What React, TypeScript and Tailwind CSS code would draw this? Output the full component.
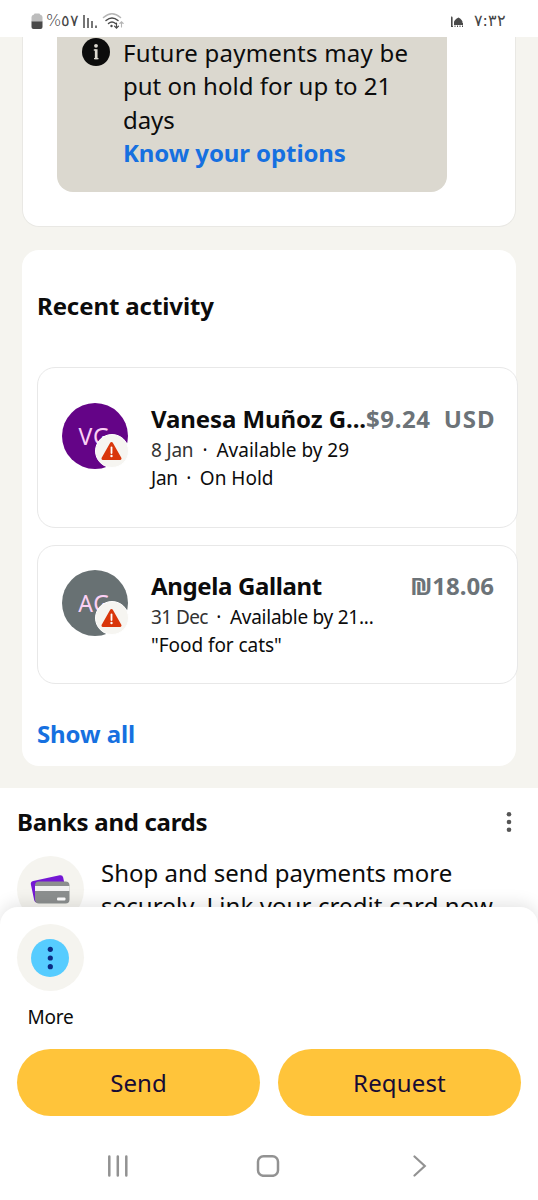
import type { ReactNode } from 'react';

function StatusBar() {
  return (
    <div className="relative z-10 flex h-[37px] shrink-0 items-center justify-between bg-white pr-[32px] pl-[31px] pt-[5px] text-[#555]">
      <div className="flex items-center">
        <svg width="12" height="17" viewBox="0 0 12 17">
          <path d="M3 1.5Q3 .5 4 .5h4q1 0 1 1 2.5.5 2.5 2.500V9H.5V4Q.5 2 3 1.500z" fill="#bdbdbd" />
          <path d="M.5 8.500h11V14q0 2-2 2h-7q-2 0-2-2z" fill="#4a4a4a" />
        </svg>
        <span className="ml-[3px] w-[30px] font-['DejaVu_Sans'] text-[16px] leading-none font-extralight tracking-[-2px] whitespace-nowrap text-[#444]">
          %٥٧
        </span>
        <svg className="ml-[7px]" width="14" height="15" viewBox="0 0 14 15" stroke="#4a4a4a" strokeWidth="1.5" fill="none">
          <path d="M1 1v13M5 4v10M9 7v7M13 11.500v2.500" />
        </svg>
        <svg className="ml-[5px]" width="23" height="18" viewBox="0 0 23 18" fill="none" strokeLinecap="round">
          <path d="M1.500 5.500Q10 -2 18.500 5.500" stroke="#b5b5b5" strokeWidth="1.500" />
          <path d="M4 8.500q6-5 12 0M6.500 11.500q3.500-3 7 0" stroke="#4a4a4a" strokeWidth="1.500" />
          <circle cx="9.500" cy="14" r="1.200" fill="#4a4a4a" />
          <path d="M14.500 11v5M12.500 14.200l2 2 2-2" stroke="#4a4a4a" strokeWidth="1.200" />
          <path d="M19.500 15v-5M17.800 11.500l1.700-1.700 1.700 1.700" stroke="#b5b5b5" strokeWidth="1.100" />
        </svg>
      </div>
      <div className="flex items-center gap-[9px]">
        <svg className="mr-px" width="14" height="13" viewBox="0 0 14 13" fill="#4a4a4a">
          <path d="M1 2.500L1.800 1l.8 1.500V11H1zM4 8q-.5-3 4.500-5.500Q13 5 12.500 8z" />
          <path d="M4 8h9v2H4zM1 11h2v1H1zM4.500 10.500h1V12h-1zM7 10.500h1V12H7zM9.500 10.500h1V12h-1zM12 10.500h1V12h-1z" />
        </svg>
        <span className="font-['DejaVu_Sans'] text-[16px] leading-none font-extralight tracking-[-1.2px] text-[#444]">
          ٧<span className="font-normal">:</span>٣٢
        </span>
      </div>
    </div>
  );
}

function WarningBadge() {
  return (
    <div className="absolute top-[31px] left-[33px] flex h-[34px] w-[34px] items-center justify-center rounded-full border-[1.5px] border-white bg-[#f6f5f1]">
      <svg width="22" height="20" viewBox="0 0 22 20">
        <path d="M10.500 2.500L19 17.500H2z" fill="#d9360b" stroke="#d9360b" strokeWidth="3" strokeLinejoin="round" />
        <path d="M10.500 6.500v5.500" stroke="#fff" strokeWidth="1.800" strokeLinecap="round" />
        <circle cx="10.500" cy="15" r="1.200" fill="#fff" />
      </svg>
    </div>
  );
}

function Avatar({ initials, color }: { initials: string; color: string }) {
  return (
    <div className="relative mt-[35px] h-[66px] w-[66px] shrink-0">
      <div
        className={`flex h-[66px] w-[66px] items-center justify-center rounded-full pr-px text-[23px] tracking-[0.800px] text-[#fbd0f5] ${color}`}
      >
        {initials}
      </div>
      <WarningBadge />
    </div>
  );
}

type ActivityProps = {
  initials: string;
  color: string;
  name: ReactNode;
  amount: ReactNode;
  height: string;
  top: string;
  children: ReactNode;
};

function Activity({ initials, color, name, amount, height, top, children }: ActivityProps) {
  return (
    <div className={`flex w-[481px] rounded-[18px] border border-[#e8e8e8] bg-white pr-[23px] pl-[24px] ${height}`}>
      <div className={`flex flex-1 ${top}`}>
        <Avatar initials={initials} color={color} />
        <div className="ml-[23px] min-w-0 flex-1 pt-[34px]">
          <div className="flex h-[34px] items-start justify-between text-[24px] leading-[33px] font-bold whitespace-nowrap">
            {name}
            {amount}
          </div>
          <div className="text-[19px] leading-[28px] whitespace-nowrap text-[#0c0c0c]">{children}</div>
        </div>
      </div>
    </div>
  );
}

function CardsIcon() {
  return (
    <svg className="-mt-px -ml-px" width="40" height="30" viewBox="0 0 40 30">
      <rect x="2" y="4" width="33" height="22" rx="3" fill="#7417d4" transform="rotate(-12 18 14)" />
      <rect x="5" y="7.500" width="34.500" height="22" rx="4" fill="#8c8f8f" />
      <path d="M5 12h34.500v5H5z" fill="#f1f1f1" />
      <rect x="27" y="23.500" width="8.500" height="3" rx="1" fill="#fff" />
    </svg>
  );
}

function App() {
  return (
    <div className="flex h-[1200px] w-[538px] flex-col overflow-hidden bg-white font-['Noto_Sans',sans-serif] text-[#0c0c0c]">
      <StatusBar />

      <div className="h-[870px] shrink-0 overflow-hidden">
        <div className="h-[751px] bg-[#f5f4ef] px-[22px]">
          <div className="h-[190px] rounded-b-[17px] border border-t-0 border-[#e9e8e4] bg-white pl-[34px]">
            <div className="flex h-[155px] w-[390px] rounded-b-[16px] bg-[#dbd8cf] pl-[25px]">
              <svg className="mt-px shrink-0" width="28" height="28" viewBox="0 0 28 28">
                <circle cx="14" cy="14" r="14" fill="#0c0c0c" />
                <circle cx="14" cy="7.800" r="1.900" fill="#dbd8cf" />
                <path d="M14.200 11.200v10" stroke="#dbd8cf" strokeWidth="2.700" />
                <path d="M11.800 12h2M12 20.700h4.500" stroke="#dbd8cf" strokeWidth="1.300" />
              </svg>
              <div className="-mt-px ml-[13px] text-[24px] leading-[33.250px] whitespace-nowrap">
                <p className="tracking-[0.220px]">Future payments may be</p>
                <p>put on hold for up to 21</p>
                <p className="tracking-[-0.100px]">days</p>
                <p className="font-bold tracking-[-0.100px] text-[#1670e0]">Know your options</p>
              </div>
            </div>
          </div>

          <div className="mt-[23px] h-[516px] w-[494px] rounded-[17px] bg-white px-[15px] pt-[39px]">
            <h2 className="text-[24px] leading-[33px] font-bold tracking-[-0.100px]">Recent activity</h2>
            <div className="mt-[45px] flex flex-col gap-[17px]">
              <Activity
                initials="VG"
                color="bg-[#640487]"
                height="h-[161px]"
                top=""
                name={<span className="tracking-[-0.080px]">Vanesa Muñoz G...</span>}
                amount={
                  <span className="flex gap-[13px] text-[#6c7378]">
                    <span className="tracking-[0.600px]">$9.24</span>
                    <span className="tracking-[1px]">USD</span>
                  </span>
                }
              >
                <p className="flex gap-[9px]">
                  <span className="tracking-[-0.200px] text-[#333]">8 Jan</span>
                  <span>·</span>
                  <span className="tracking-[-0.020px]">Available by 29</span>
                </p>
                <p className="flex gap-[8.500px]">
                  <span className="tracking-[-0.300px]">Jan</span>
                  <span>·</span>
                  <span>On Hold</span>
                </p>
              </Activity>
              <Activity
                initials="AG"
                color="bg-[#687173]"
                height="h-[139px]"
                top="-mt-[11px]"
                name={<span className="tracking-[-0.360px]">Angela Gallant</span>}
                amount={<span className="text-[#6c7378]">₪18.06</span>}
              >
                <p className="flex gap-[8.500px]">
                  <span className="tracking-[-0.600px] text-[#333]">31 Dec</span>
                  <span>·</span>
                  <span className="tracking-[-0.250px]">Available by 21...</span>
                </p>
                <p className="tracking-[-0.050px]">"Food for cats"</p>
              </Activity>
            </div>
            <p className="mt-[33px] text-[24px] leading-[33px] font-bold tracking-[-0.100px] text-[#1670e0]">Show all</p>
          </div>
        </div>

        <div className="px-[17px] pt-[17px]">
          <div className="flex items-center justify-between pr-[9px]">
            <h2 className="text-[24px] leading-[33px] font-bold tracking-[-0.300px]">Banks and cards</h2>
            <svg width="6" height="22" viewBox="0 0 6 22" fill="#555">
              <circle cx="3" cy="3.200" r="2.300" />
              <circle cx="3" cy="11" r="2.300" />
              <circle cx="3" cy="18.800" r="2.300" />
            </svg>
          </div>
          <div className="mt-[18px] flex">
            <div className="flex h-[67px] w-[67px] items-center justify-center rounded-full bg-[#f5f4ef]">
              <CardsIcon />
            </div>
            <div className="ml-[17px] text-[24px] leading-[33px] whitespace-nowrap">
              <p>Shop and send payments more</p>
              <p className="tracking-[0.100px]">securely. Link your credit card now.</p>
            </div>
          </div>
        </div>
      </div>

      <div className="relative flex-1 rounded-t-[18px] bg-white px-[17px] pt-[17px] shadow-[0_-4px_16px_rgba(0,0,0,0.1)]">
        <div className="flex w-[67px] flex-col items-center">
          <div className="flex h-[67px] w-[67px] items-center justify-center rounded-full bg-[#f5f4ef]">
            <svg className="-ml-px" width="38" height="38" viewBox="0 0 38 38" fill="#0b2b83">
              <circle cx="19" cy="19" r="19" fill="#56ccff" />
              <circle cx="19.300" cy="10.300" r="2.600" />
              <circle cx="19.300" cy="19" r="2.600" />
              <circle cx="19.300" cy="27.700" r="2.600" />
            </svg>
          </div>
          <span className="mt-[12px] text-[19px] leading-[28px] tracking-[-0.200px]">More</span>
        </div>
        <div className="mt-[18px] flex gap-[18px]">
          <button className="h-[67px] w-[243px] rounded-full bg-[#ffc43a] text-[24px] text-[#170b35]">Send</button>
          <button className="h-[67px] w-[243px] rounded-full bg-[#ffc43a] text-[24px] tracking-[0.150px] text-[#170b35]">
            Request
          </button>
        </div>
        <div className="mt-[39px] flex items-center pl-[90px]">
          <svg width="22" height="22" viewBox="0 0 22 22" stroke="#929292" strokeWidth="2.500" strokeLinecap="round">
            <path d="M2.300 1.500v19M10.800 1.500v19M19.300 1.500v19" />
          </svg>
          <svg className="ml-[127px]" width="24" height="22" viewBox="0 0 24 22" stroke="#929292" strokeWidth="2.500" fill="none">
            <rect x="2" y="1.300" width="20" height="19.500" rx="5.500" />
          </svg>
          <svg className="ml-[133px]" width="14" height="22" viewBox="0 0 14 22" stroke="#929292" strokeWidth="2.200" strokeLinecap="round" fill="none">
            <path d="M1.500 1.500l10.300 9.500-10.300 9.500" />
          </svg>
        </div>
      </div>
    </div>
  );
}

export default App;
